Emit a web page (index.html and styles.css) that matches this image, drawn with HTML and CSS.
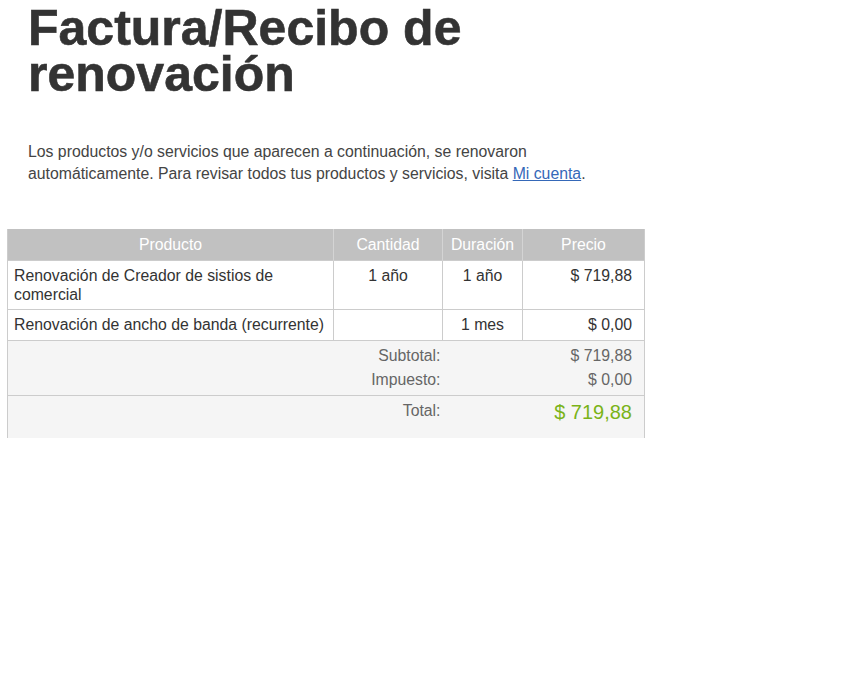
FILE: index.html
```html
<!DOCTYPE html>
<html lang="es">
<head>
    <meta charset="UTF-8">
    <meta name="viewport" content="width=device-width, initial-scale=1.0">
    <title>Factura/Recibo de renovación</title>
    <link rel="stylesheet" href="styles.css">
</head>
<body>
    <div class="intro">
        <h1>Factura/Recibo de renovación</h1>
        <p>Los productos y/o servicios que aparecen a continuación, se renovaron automáticamente. Para revisar todos tus productos y servicios, visita <a href="#">Mi cuenta</a>.</p>
    </div>

    <table class="invoice">
        <thead>
            <tr>
                <th class="col-product">Producto</th>
                <th class="col-qty">Cantidad</th>
                <th class="col-term">Duración</th>
                <th class="col-price">Precio</th>
            </tr>
        </thead>
        <tbody>
            <tr>
                <td>Renovación de Creador de sistios de comercial</td>
                <td class="center">1 año</td>
                <td class="center">1 año</td>
                <td class="right">$ 719,88</td>
            </tr>
            <tr>
                <td>Renovación de ancho de banda (recurrente)</td>
                <td></td>
                <td class="center">1 mes</td>
                <td class="right">$ 0,00</td>
            </tr>
        </tbody>
        <tfoot>
            <tr class="sub first">
                <td colspan="2" class="label">Subtotal:</td>
                <td></td>
                <td class="value">$ 719,88</td>
            </tr>
            <tr class="sub last">
                <td colspan="2" class="label">Impuesto:</td>
                <td></td>
                <td class="value">$ 0,00</td>
            </tr>
            <tr class="total">
                <td colspan="2" class="label">Total:</td>
                <td></td>
                <td class="value">$ 719,88</td>
            </tr>
        </tfoot>
    </table>
</body>
</html>
```

FILE: styles.css
```css
body {
    margin: 0;
    padding: 0 0 0 7px;
    font-family: 'Liberation Sans', Arial, sans-serif;
    color: #333;
    background: #fff;
}

.intro {
    padding-left: 21px;
    width: 580px;
}

h1 {
    margin: 5px 0 0;
    font-size: 50px;
    line-height: 46px;
    font-weight: bold;
    color: #333;
    -webkit-text-stroke: 0.6px #333;
}

.intro p {
    margin: 44px 0 44px;
    font-size: 15.8px;
    line-height: 22px;
    color: #444;
}

.intro a {
    color: #3568b8;
}

.invoice {
    width: 638px;
    table-layout: fixed;
    border-collapse: collapse;
    font-size: 15.8px;
    line-height: 19px;
    border-left: 1px solid #ccc;
    border-right: 1px solid #ccc;
}

.invoice th {
    box-sizing: border-box;
    background-color: #c1c1c1;
    color: #fff;
    font-weight: normal;
    padding: 6px;
    text-align: center;
    border-left: 1px solid #d4d4d4;
}

.invoice th:first-child {
    border-left: none;
}

.col-product { width: 326px; }
.col-qty { width: 109px; }
.col-term { width: 80px; }
.col-price { width: 122px; }

.invoice td {
    padding: 5px 6px;
    vertical-align: top;
    border: 1px solid #ccc;
}

.invoice tbody tr + tr td {
    padding-bottom: 6px;
}

.invoice .center { text-align: center; }
.invoice .right { text-align: right; padding-right: 12px; }

.invoice tfoot td {
    border: none;
    background-color: #f5f5f5;
    color: #666;
}

.invoice tfoot .label {
    text-align: right;
    padding-right: 2px;
}

.invoice tfoot .value {
    text-align: right;
    padding-right: 12px;
}

.sub td {
    padding-top: 2px;
    padding-bottom: 3px;
}

.sub.first td { padding-top: 5px; }
.sub.last td { padding-bottom: 6px; }

.total td {
    border-top: 1px solid #ccc !important;
    padding-top: 5px;
    padding-bottom: 15px;
}

.total .value {
    color: #7ab317 !important;
    font-size: 20px;
    line-height: 22px;
}
```
